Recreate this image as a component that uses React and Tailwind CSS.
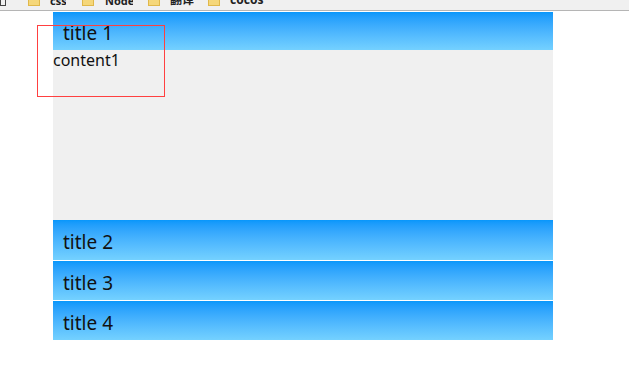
export default function App() {
  const titleCls =
    "h-[40px] bg-gradient-to-b from-[#0797fb] to-[#74d1ff] pl-[10px] flex items-center pt-[5px] text-[19px] text-[#111]";
  const folder = "shrink-0 w-[12px] h-[14px] bg-[#f5d77a] border border-[#e0b84a]";
  const label = "shrink-0 font-bold whitespace-nowrap overflow-hidden";
  return (
    <div
      className="w-[629px] h-[383px] bg-white relative overflow-hidden"
      style={{ fontFamily: '"Noto Sans", "Noto Sans CJK SC", sans-serif' }}
    >
      <div className="h-[10px] box-content bg-[#f0f0f0] border-b border-[#b5b5b5] overflow-hidden relative">
        <div className="flex items-end h-[10px] text-[12px] leading-none text-[#222] -mt-[4px]">
          <span className="shrink-0 w-[6px] h-[14px] border border-[#444]"></span>
          <span className={folder + " ml-[22px]"}></span>
          <span className={label + " ml-[10px] w-[16px] text-[11px]"}>css</span>
          <span className={folder + " ml-[16px]"}></span>
          <span className={label + " ml-[11px] w-[28px] text-[11px]"}>Node</span>
          <span className={folder + " ml-[15px]"}></span>
          <span className={label + " ml-[10px] w-[24px]"}>翻译</span>
          <span className={folder + " ml-[14px]"}></span>
          <span className={label + " ml-[10px] w-[37px]"}>cocos</span>
        </div>
      </div>
      <div className="pl-[53px] pt-[1px]">
        <div className="w-[500px]">
          <div className="h-[38px] bg-gradient-to-b from-[#0797fb] to-[#74d1ff] pl-[10px] flex items-center pt-[4px] text-[19px] text-[#111]">
            title 1
          </div>
          <div className="h-[170px] bg-[#f0f0f0] text-[16px] leading-[21px] text-[#111]">
            content1
          </div>
          <div className={titleCls + " h-[39px] pt-[4px]"}>title 2</div>
          <div className={titleCls + " border-t border-white"}>title 3</div>
          <div className={titleCls + " border-t border-white"}>title 4</div>
        </div>
      </div>
      <div className="absolute left-[37px] top-[25px] w-[128px] h-[72px] border border-[#ff4040]"></div>
    </div>
  );
}
